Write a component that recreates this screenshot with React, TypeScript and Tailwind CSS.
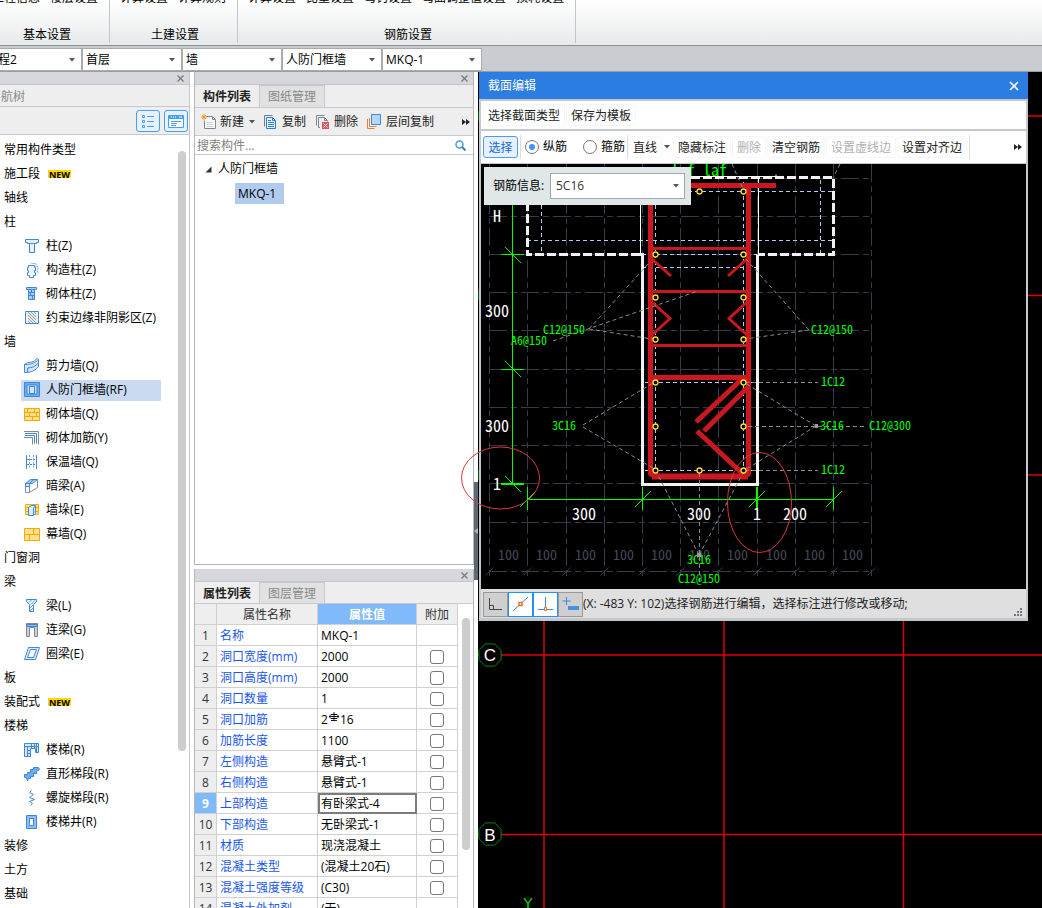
import React from "react";

const BLUE = "#3f86d6";

type IconName =
  | "column" | "tieColumn" | "brickColumn" | "hatch" | "shearWall" | "frameWall"
  | "brickWall" | "brickBar" | "insulation" | "hiddenBeam" | "pier" | "curtain"
  | "beam" | "linkBeam" | "ringBeam" | "stair" | "flight" | "spiral" | "well";

const icons: Record<IconName, React.ReactNode> = {
  column: (
    <g fill="#e8f2fd" stroke={BLUE}>
      <path d="M1.500 1.500h13v3h-2v1h-9v-1h-2z" />
      <path d="M5.500 5.500h5v9h-5z" />
    </g>
  ),
  tieColumn: (
    <g fill="none">
      <path d="M7 1.500h5v3h2v3h-1v2h1v2" stroke="#9cc3ec" />
      <path d="M4.500 3.500h6v2h1v3h-1v2h1v3h-2v2h-4v-2h-2v-3h1v-2h-1v-3h1z" stroke={BLUE} fill="#f3f8fe" />
    </g>
  ),
  brickColumn: (
    <g>
      <path d="M2.500 1.500h10v2h-10z" fill="#a9cdf5" stroke={BLUE} />
      <path d="M4.500 3.500h6v10h-6z" fill="#a9cdf5" stroke={BLUE} />
      <path d="M5 6.500h5M5 9.500h5M7.500 4v2M6.500 7v2M8.500 10v3" stroke={BLUE} />
    </g>
  ),
  hatch: (
    <g>
      <path d="M1.500 1.500h13v12h-13z" fill="#e8f2fd" stroke={BLUE} />
      <path d="M4 2h8v11h-8z" fill="#e4e4e4" />
      <path d="M4 2l8 8M4 5l8 8M4 8l5 5M4 11l2 2M7 2l5 5M10 2l2 2" stroke="#8c959c" strokeWidth=".8" />
    </g>
  ),
  shearWall: (
    <g stroke={BLUE} fill="#d4e6fb">
      <path d="M.500 6.500c7 0 11-2 14-5v7c-3 4-7 6-14 6z" />
      <path d="M.500 6.500l3-2c4 0 8-1 9-4l2 1M3.500 14v-4c5 0 8-2 11-5" fill="none" />
    </g>
  ),
  frameWall: (
    <g stroke={BLUE}>
      <path d="M.500.500h15v14h-15z" fill="#6badf2" />
      <path d="M3 3h10v9h-10z" fill="#c7dcf6" />
      <path d="M5.500 4.500h5v7h-5z" fill="#d6e6fa" />
    </g>
  ),
  brickWall: (
    <g stroke="#f5a800">
      <path d="M.500 2.500h15v12h-15z" fill="#ffe08e" />
      <path d="M0 6.500h16M0 10.500h16M10.500 3v3M5.500 7v3M12.500 7v3M8.500 11v3M3.500 3v3" />
    </g>
  ),
  brickBar: (
    <g fill="none">
      <path d="M0 1.500h14.500v13M0 7.500h8.500v7" stroke="#7d8a92" />
      <path d="M1 3.500h11.500v10M1 5.500h9.500v8" stroke={BLUE} />
    </g>
  ),
  insulation: (
    <g fill="none" stroke={BLUE}>
      <path d="M2.500 1v14M12.500 1v14" />
      <path d="M5.500 1v14M9.500 1v14" strokeDasharray="2 1.500" stroke="#6ea5e2" />
      <path d="M3 5.500h9M3 10.500h9" strokeDasharray="2 1" />
    </g>
  ),
  hiddenBeam: (
    <g>
      <path d="M1.500 5.500l5-4h7l-5 4z" fill="#a9cdf5" stroke={BLUE} />
      <path d="M1.500 5.500v9h4v-9zM5.500 14.500l8-5v-8" fill="none" stroke="#7d8a92" />
      <path d="M1.500 5.500h4v3h-4zM5.500 5.500l4-4" fill="#d4e6fb" stroke={BLUE} />
    </g>
  ),
  pier: (
    <g>
      <path d="M1.500 2.500h13v10h-13zM1 5.500h13M1 9.500h13" fill="#ffe08e" stroke="#f5a800" />
      <path d="M4.500 5.500l3-2h4v8l-2 2h-5z" fill="#dcebfc" stroke={BLUE} />
      <path d="M9.500 13v-7l2-2" fill="none" stroke={BLUE} />
    </g>
  ),
  curtain: (
    <g stroke="#f5a800">
      <path d="M.500 2.500h15v12h-15z" fill="#ffe08e" />
      <path d="M0 8.500h16M9.500 3v5M5.500 9v5" />
    </g>
  ),
  beam: (
    <g fill="#e8f2fd" stroke={BLUE}>
      <path d="M2.500 1.500h10v2l-3 3v7h-4v-7l-3-3z" />
      <path d="M5 4.500l3-3M7 6.500l4-4M6 10l3-3M6 13l3-3" strokeWidth=".8" />
    </g>
  ),
  linkBeam: (
    <g>
      <path d="M2.500 1.500h11v13h-3v-9h-5v9h-3z" fill="#c9d0d5" stroke="#7d8a92" />
      <path d="M3 2.500h10v2h-10z" fill="#8dbdf1" stroke={BLUE} />
    </g>
  ),
  ringBeam: (
    <g fill="none" stroke={BLUE}>
      <path d="M4.500 1.500h11l-4 12h-11z" fill="#dcebfc" />
      <path d="M6.500 3.500h6l-3 8h-6z" fill="#fff" />
    </g>
  ),
  stair: (
    <g fill="none" stroke={BLUE}>
      <path d="M.500 1.500h14v9h-3v-4h-5v8h-6z" fill="#d4e6fb" />
      <path d="M1 4.500h13M7.500 2v4M10.500 2v4M12.500 2v8M3.500 5v9M3 8.500h4M3 11.500h4" />
    </g>
  ),
  flight: (
    <path d="M.500 11.500v-3h3v-2h3v-3h3v-2h5l1 2-3 2v2h-3v3h-3v2h-2l-1 2.500-1-3z" fill="#6badf2" stroke={BLUE} />
  ),
  spiral: (
    <path d="M7.500.500l-2 2 4 2-4 3 5 2-5 2 3 2-2 2" fill="none" stroke={BLUE} />
  ),
  well: (
    <g stroke={BLUE}>
      <path d="M2.500 1.500h10v13h-10z" fill="#8dbdf1" />
      <path d="M5.500 4.500h4v7h-4z" fill="#fff" />
    </g>
  ),
};

type TreeItem = { label: string; icon?: IconName; isNew?: boolean; selected?: boolean };

const tree: TreeItem[] = [
  { label: "常用构件类型" },
  { label: "施工段", isNew: true },
  { label: "轴线" },
  { label: "柱" },
  { label: "柱(Z)", icon: "column" },
  { label: "构造柱(Z)", icon: "tieColumn" },
  { label: "砌体柱(Z)", icon: "brickColumn" },
  { label: "约束边缘非阴影区(Z)", icon: "hatch" },
  { label: "墙" },
  { label: "剪力墙(Q)", icon: "shearWall" },
  { label: "人防门框墙(RF)", icon: "frameWall", selected: true },
  { label: "砌体墙(Q)", icon: "brickWall" },
  { label: "砌体加筋(Y)", icon: "brickBar" },
  { label: "保温墙(Q)", icon: "insulation" },
  { label: "暗梁(A)", icon: "hiddenBeam" },
  { label: "墙垛(E)", icon: "pier" },
  { label: "幕墙(Q)", icon: "curtain" },
  { label: "门窗洞" },
  { label: "梁" },
  { label: "梁(L)", icon: "beam" },
  { label: "连梁(G)", icon: "linkBeam" },
  { label: "圈梁(E)", icon: "ringBeam" },
  { label: "板" },
  { label: "装配式", isNew: true },
  { label: "楼梯" },
  { label: "楼梯(R)", icon: "stair" },
  { label: "直形梯段(R)", icon: "flight" },
  { label: "螺旋梯段(R)", icon: "spiral" },
  { label: "楼梯井(R)", icon: "well" },
  { label: "装修" },
  { label: "土方" },
  { label: "基础" },
];

const properties: [string, string][] = [
  ["名称", "MKQ-1"],
  ["洞口宽度(mm)", "2000"],
  ["洞口高度(mm)", "2000"],
  ["洞口数量", "1"],
  ["洞口加筋", "2#16"],
  ["加筋长度", "1100"],
  ["左侧构造", "悬臂式-1"],
  ["右侧构造", "悬臂式-1"],
  ["上部构造", "有卧梁式-4"],
  ["下部构造", "无卧梁式-1"],
  ["材质", "现浇混凝土"],
  ["混凝土类型", "(混凝土20石)"],
  ["混凝土强度等级", "(C30)"],
  ["混凝土外加剂", "(无)"],
];

function Caret() {
  return (
    <svg width="6" height="4" viewBox="0 0 6 4" className="shrink-0" aria-hidden="true">
      <path d="M0 0h6L3 3.500z" fill="#555" />
    </svg>
  );
}

function More() {
  return (
    <svg width="8" height="6" viewBox="0 0 8 6" className="shrink-0" aria-hidden="true">
      <path d="M0 0l4 3-4 3zM4 0l4 3-4 3z" fill="#222" />
    </svg>
  );
}

function Combo({ label, value }: { label: string; value: string }) {
  return (
    <div className="relative flex h-[23px] w-25 items-center border border-[#a9abad] bg-white">
      <select aria-label={label} className="h-full w-full appearance-none pl-[3px] text-xs leading-5 text-black outline-none">
        <option>{value}</option>
      </select>
      <span className="pointer-events-none absolute right-1.5 flex"><Caret /></span>
    </div>
  );
}

function RibbonGroup({ items, title }: { items: string[]; title: string }) {
  return (
    <div className="flex flex-col items-center justify-between border-r border-[#c3c6c8] pr-[11px] pl-2.5">
      <div className="-mt-2.5 flex gap-2.5">
        {items.map((t) => (
          <button key={t} type="button" className="leading-4">{t}</button>
        ))}
      </div>
      <span className="pl-1 leading-4">{title}</span>
    </div>
  );
}

function PanelBar() {
  return (
    <div className="flex h-[13px] shrink-0 items-center justify-end border-b border-[#c3c6cc] bg-[#d5d7dc] pt-px pr-[5px]">
      <button type="button" aria-label="关闭" className="flex">
        <svg width="7" height="7" viewBox="0 0 7 7"><path d="M.500.500l6 6M6.500.500l-6 6" stroke="#777" strokeWidth="1.200" /></svg>
      </button>
    </div>
  );
}

function Tabs({ names, compact }: { names: [string, string]; compact?: boolean }) {
  return (
    <div className={compact ? "flex h-[22px] shrink-0 border-b border-[#c6c9ce] bg-[#eeeeee]" : "flex h-[23px] shrink-0 border-b border-[#c6c9ce] bg-[#eeeeee]"} role="tablist">
      <button type="button" role="tab" aria-selected="true" className="w-[65px] border-r border-[#c6c9ce] pt-0.5 font-bold text-[#222]">{names[0]}</button>
      <button type="button" role="tab" aria-selected="false" className="w-[65px] border-t border-r border-[#c6c9ce] bg-[#e1e1e1] pt-px text-[#888]">{names[1]}</button>
    </div>
  );
}

function NavPanel() {
  return (
    <aside className="flex w-[190px] shrink-0 flex-col border-r border-[#c3c6ca] bg-white">
      <PanelBar />
      <div className="flex h-[22px] shrink-0 items-center border-b border-[#c6c9ce] bg-[#eeeeee] pt-0.5 text-[#888]">
        <span className="-ml-[11px]">导航树</span>
      </div>
      <div className="flex h-7 shrink-0 items-center justify-end gap-1 border-b border-[#c6c9ce] bg-[#eeeeee] pr-px">
        <button type="button" aria-label="列表视图" className="flex h-[22px] w-6 items-center justify-center rounded-[3px] border border-[#4a9df5] bg-[#e6f1fd]">
          <svg width="14" height="14" viewBox="0 0 14 14" fill="none" stroke="#4a9df5">
            <path d="M1.500 1.500h2v2h-2zM1.500 6.500h2v2h-2zM1.500 11.500h2v2h-2z" />
            <path d="M6 2.500h7M6 7.500h7M6 12.500h7" />
          </svg>
        </button>
        <button type="button" aria-label="窗口视图" className="flex h-[22px] w-6 items-center justify-center rounded-[3px] border border-[#4a9df5] bg-[#e6f1fd]">
          <svg width="16" height="14" viewBox="0 0 16 14">
            <path d="M.500 1.500h15v12h-15z" fill="#fff" stroke="#4a9df5" />
            <path d="M1 1h14v4H1z" fill="#4a9df5" />
            <path d="M3 3h1M5 3h1M7 3h1M11 3h3" stroke="#fff" />
            <path d="M3 7.500h10M3 9.500h6M3 11.500h5" stroke="#4a9df5" />
          </svg>
        </button>
      </div>
      <div className="flex min-h-0 flex-1 overflow-hidden">
        <ul className="min-w-0 flex-1 pt-[3px]">
          {tree.map((item) =>
            item.icon ? (
              <li key={item.label} className="flex h-6 items-center pl-[21px]">
                <span className={item.selected ? "flex h-[21px] w-35 items-center bg-[#c9daf1] pl-[3px]" : "flex h-[21px] w-35 items-center pl-[3px]"}>
                  <svg width="16" height="16" viewBox="0 0 16 16" className="mr-1.5 shrink-0" aria-hidden="true">{icons[item.icon]}</svg>
                  <span className="whitespace-nowrap">{item.label}</span>
                </span>
              </li>
            ) : (
              <li key={item.label} className="flex h-6 items-center pl-1">
                {item.label}
                {item.isNew && (
                  <span className="ml-2 flex h-2 items-center bg-[#ffd800] px-px text-[9px] leading-none font-bold">NEW</span>
                )}
              </li>
            ),
          )}
        </ul>
        <div className="mt-4 mr-[3px] h-[600px] w-2 rounded-full bg-[#cdcdcd]" />
      </div>
    </aside>
  );
}

function ComponentPanel() {
  return (
    <section className="flex h-[493px] shrink-0 flex-col border border-t-0 border-[#b5b7ba] bg-white">
      <PanelBar />
      <Tabs names={["构件列表", "图纸管理"]} />
      <div className="flex h-7 shrink-0 items-center border-b border-[#c6c9ce] bg-[#eeeeee] pr-[3px] pl-1.5 text-[#222]">
        <button type="button" className="flex items-center gap-[3px]">
          <svg width="16" height="16" viewBox="0 0 16 16">
            <path d="M5.500 2.500h6l3 3v9h-11v-8" fill="#f6f6f6" stroke="#7d8a92" />
            <path d="M11.500 2.500v3h3" fill="none" stroke="#7d8a92" />
            <path d="M6 8.500h6M6 10.500h6M6 12.500h6" stroke="#d0d4d7" />
            <path d="M3 0v6M0 3h6M1 1l4 4M5 1l-4 4" stroke="#f59a1c" />
          </svg>
          新建
        </button>
        <span className="mr-2 ml-[5px]"><Caret /></span>
        <button type="button" className="flex items-center gap-[5px]">
          <svg width="14" height="16" viewBox="0 0 14 16">
            <path d="M1.500 12.500v-11h8" fill="none" stroke="#5f7f9f" />
            <path d="M3.500 3.500h6l3 3v8h-9z" fill="#e6f1fd" stroke="#2f7bd3" />
            <path d="M9.500 3.500v3h3M5 8.500h6M5 10.500h6M5 12.500h6M5 6.500h3" fill="none" stroke="#2f7bd3" />
          </svg>
          复制
        </button>
        <button type="button" className="ml-[9px] flex items-center gap-[3px]">
          <svg width="16" height="16" viewBox="0 0 16 16">
            <path d="M1.500 11.500v-10h8M5 13.500h-1.500v-10h6l3 3v1M9.500 3.500v3h3" fill="none" stroke="#7d8a92" />
            <path d="M7 8h7v7H7z" fill="#d9535a" />
            <path d="M8.500 9.500l4 4M12.500 9.500l-4 4" stroke="#fff" />
          </svg>
          删除
        </button>
        <button type="button" className="ml-2 flex items-center gap-1">
          <svg width="16" height="16" viewBox="0 0 16 16">
            <path d="M1.500 5v9.500h7M3.500 4v8.500h7" fill="none" stroke="#f08030" />
            <path d="M5.500.500h9v10h-9z" fill="#b5d6fb" stroke="#3f86d6" />
          </svg>
          层间复制
        </button>
        <button type="button" aria-label="更多" className="ml-auto flex"><More /></button>
      </div>
      <label className="flex h-[19px] shrink-0 items-center border-b border-[#c6c9ce] pr-[7px] pl-0.5">
        <input type="text" aria-label="搜索构件" placeholder="搜索构件..." className="h-full min-w-0 flex-1 text-xs outline-none placeholder:text-[#808080]" />
        <svg width="11" height="11" viewBox="0 0 11 11" fill="none">
          <circle cx="4.500" cy="4.500" r="3.500" stroke="#4a9fd0" strokeWidth="1.500" />
          <path d="M7 7l3.500 3.500" stroke="#2f86c0" strokeWidth="2" />
        </svg>
      </label>
      <ul className="pt-0.5">
        <li className="flex h-6 items-center pl-[10px]">
          <svg width="7" height="7" viewBox="0 0 7 7" className="mr-1.5"><path d="M6.500.500v6h-6z" fill="#333" /></svg>
          人防门框墙
        </li>
        <li className="flex h-6 items-center pl-10">
          <span className="h-[21px] w-[49px] bg-[#b1cbee] pl-[3px] leading-[21px]">MKQ-1</span>
        </li>
      </ul>
    </section>
  );
}

function RebarValue({ value }: { value: string }) {
  const [count, size] = value.split("#");
  return (
    <span className="flex items-center">
      {count}
      <svg width="10" height="11" viewBox="0 0 10 11" className="mx-px mb-1" fill="none" stroke="#000">
        <path d="M2 2.500h6l1 1v2l-1 1H2l-1-1v-2z" />
        <path d="M5 0v9M2 8.500h6M0 4.500h10" strokeWidth=".9" />
      </svg>
      {size}
    </span>
  );
}

function PropertyPanel() {
  const cell = "h-[21px] border-r border-b border-[#d0d0d0] p-0 pt-px";
  return (
    <section className="mt-1 flex min-h-0 flex-1 flex-col border-x border-[#b5b7ba] bg-white">
      <PanelBar />
      <Tabs names={["属性列表", "图层管理"]} compact />
      <div className="flex min-h-0 flex-1 overflow-hidden">
        <table className="w-[263px] shrink-0 table-fixed border-separate border-spacing-0 self-start leading-[19px]">
          <colgroup>
            <col className="w-[22px]" />
            <col className="w-[101px]" />
            <col className="w-[99px]" />
            <col className="w-[41px]" />
          </colgroup>
          <thead>
            <tr className="bg-[#eeeeee] text-[#333]">
              <th className={cell} aria-label="序号" />
              <th className={`${cell} font-normal`}>属性名称</th>
              <th className={`${cell} bg-[#80bafb] font-bold text-white`}>属性值</th>
              <th className={`${cell} font-normal`}>附加</th>
            </tr>
          </thead>
          <tbody>
            {properties.map(([name, value], i) => {
              const active = i === 8;
              return (
                <tr key={name}>
                  <td className={active ? `${cell} bg-[#80bafb] text-center font-bold text-white` : `${cell} bg-[#eeeeee] text-center text-[#333]`}>{i + 1}</td>
                  <td className={`${cell} pl-[3px] whitespace-nowrap text-[#1a56e8]`}>{name}</td>
                  <td className={active ? `${cell} pl-[3px] outline-2 -outline-offset-2 outline-[#7c7c7c]` : `${cell} pl-[3px]`}>
                    {value.includes("#") ? <RebarValue value={value} /> : value}
                  </td>
                  <td className={cell}>
                    {i > 0 && i < 13 && (
                      <input type="checkbox" aria-label={`附加 ${name}`} className="mx-auto block size-3.5 appearance-none rounded-[3px] border border-[#777] bg-white" />
                    )}
                  </td>
                </tr>
              );
            })}
          </tbody>
        </table>
        <div className="mt-3.5 ml-1 h-[232px] w-2 rounded-full bg-[#cdcdcd]" />
      </div>
    </section>
  );
}

const gridX = [489.5, 527.5, 566.5, 604.5, 642.5, 680.5, 718.5, 757.5, 795.5, 833.5, 871.5];
const gridY = [178.5, 216.5, 254.5, 292.5, 330.5, 369.5, 407.5, 445.5, 483.5, 522.5, 571.5];
const bars: [number, number][] = [
  [699, 191], [743, 191], [655, 254], [743, 254], [655, 297], [743, 297], [655, 339], [743, 339],
  [655, 382], [743, 382], [655, 426], [743, 426], [655, 470], [699, 470], [743, 470],
];
const greenLabels: [number, number, string][] = [
  [543, 334, "C12@150"], [511, 345, "A6@150"], [552, 430, "3C16"], [811, 334, "C12@150"],
  [821, 386, "1C12"], [820, 430, "3C16"], [869, 430, "C12@300"], [821, 474, "1C12"],
  [687, 564, "3C16"], [678, 583, "C12@150"],
];
const dims: [number, number, string][] = [
  [497, 222, "H"], [497, 317, "300"], [497, 432, "300"], [497, 490, "1"],
  [584, 520, "300"], [699, 520, "300"], [757, 520, "1"], [795, 520, "200"],
];
const cad = "font-['Noto_Sans_Mono_CJK_SC','DejaVu_Sans_Mono',monospace]";

function SectionDrawing() {
  return (
    <svg className={`block h-full w-full ${cad}`} role="img" aria-label="截面">
      <g transform="translate(-481 -164)" fill="none">
        <g stroke="#343b49">
          {gridX.map((x) => <path key={x} d={`M${x} 164V578`} strokeDasharray="18 4 6 4" />)}
          {gridY.map((y) => <path key={y} d={`M489 ${y}H872`} strokeDasharray="18 4 6 4" />)}
          {gridX.map((x) => <path key={x} d={`M${x - 4} 575.500l8-8`} />)}
        </g>
        <g fill="#434a58" fontSize="14" textAnchor="middle">
          {gridX.slice(0, 10).map((x) => <text key={x} x={x + 19} y="560">100</text>)}
        </g>
        <g stroke="#aecbf0" strokeDasharray="4 3">
          <path d="M541.500 191V254M541 191.500H833M527 240.500H833M820.500 180V254" />
          <path d="M655.500 191V474M743.500 182V474M642 254.500H757M642 267.500H757M645 382.500H752M645 470.500H752" />
        </g>
        <text x="671" y="176" fill="#00ff00" fontSize="16">laf laf</text>
        <path d="M527.500 178V254.500H642M691 177.500H833.500V254.500H758" stroke="#f2f2f2" strokeWidth="3" strokeDasharray="9 3" />
        <path d="M640.500 178V254M758.500 178V254M691 176.500H776V174.500" stroke="#fffff0" />
        <path d="M640 254.500H642.500V484.500H757.500V254.500" stroke="#f2f2f2" strokeWidth="3" />
        <g stroke="#c91820" strokeWidth="3">
          <path d="M650.500 180V473M748.500 186V472M650 185.500H776" strokeWidth="5" />
          <path d="M652 476.500H748" strokeWidth="6" />
          <path d="M650 377.500H748" strokeWidth="5" />
          <path d="M650 248.500H748M650 291.500H748M650 345.500H748" />
          <path d="M652 259l19 17M747 259l-19 17M652 302l18 16.500-18 16.500M747 302l-18 16.500 18 16.500" />
          <path d="M743 378L696 422M748 387L704 431M697 431L744 475" strokeWidth="5" />
          <circle cx="652" cy="473" r="2.500" fill="#c91820" />
          <circle cx="747" cy="473" r="2.500" fill="#c91820" />
        </g>
        <g stroke="#8c8c8c" strokeDasharray="4 3">
          <path d="M589 329L650 262M589 329L652 339M553 341L698 291" />
          <path d="M583 425L653 383M583 427L653 468" />
          <path d="M809 330L746 259M809 330L745 339M745 382.500H818M745 470.500H818" />
          <path d="M816 426L745 383M816 426L745 470M748 426.500H867" />
          <path d="M699 555L657 473M699.500 473V585M699 555L743 473M732 164L743 189M840 164L833 178" />
        </g>
        <path d="M697 553h4v4h-4zM815 424h3v4h-3z" fill="#9a9a9a" />
        <g stroke="#ffdf20" strokeWidth="1.300" fill="#000">
          {bars.map(([x, y]) => <circle key={`${x}-${y}`} cx={x + 0.5} cy={y + 0.5} r="2.500" />)}
        </g>
        <g stroke="#00ff00">
          <path d="M512.500 200V484M501 254.500h23M505 247l16 16M501 369.500h23M505 361l16 16M505 476l16 16" />
          <path d="M501 484h23" strokeWidth="2" />
          <path d="M527 499.500H834M527.500 487v23M642.500 487v23M833.500 487v23" />
          <path d="M520 507l16-16M635 507l16-16M749 507l16-16M826 507l16-16" />
          <path d="M757 487v23" strokeWidth="2" />
        </g>
        <g fill="#fff" fontSize="16" textAnchor="middle">
          {dims.map(([x, y, t]) => <text key={`${x}-${y}`} x={x} y={y}>{t}</text>)}
        </g>
        <g fill="#00ff00" fontSize="12">
          {greenLabels.map(([x, y, t]) => <text key={`${x}-${y}`} x={x} y={y}>{t}</text>)}
        </g>
      </g>
    </svg>
  );
}

function ToolButton({ children, muted }: { children: React.ReactNode; muted?: boolean }) {
  return (
    <button
      type="button"
      disabled={muted}
      className={
        muted
          ? "h-[22px] rounded-[3px] border border-[#f6f6f6] px-1 pt-px whitespace-nowrap text-[#b0b0b0]"
          : "h-[22px] rounded-[3px] border border-[#f6f6f6] px-1 pt-px whitespace-nowrap text-[#222]"
      }
    >
      {children}
    </button>
  );
}

function Radio({ label, checked }: { label: string; checked?: boolean }) {
  return (
    <label className="flex items-center gap-1 text-black">
      <span className="relative flex size-3.5 items-center justify-center">
        <input type="radio" name="bar-kind" defaultChecked={checked} className="peer size-3.5 appearance-none rounded-full border border-[#777] bg-white" />
        <span className="absolute hidden size-1.5 rounded-full bg-[#3f93f5] peer-checked:block" />
      </span>
      {label}
    </label>
  );
}

function SectionDialog() {
  return (
    <section role="dialog" aria-label="截面编辑" className="absolute top-0 left-px flex h-[549px] w-[549px] flex-col bg-[#c3c8cf]">
      <header className="flex h-[27px] shrink-0 items-center justify-between bg-[#2b7de1] px-[9px] text-white">
        <h2 className="pt-px">截面编辑</h2>
        <button type="button" aria-label="关闭" className="flex">
          <svg width="10" height="10" viewBox="0 0 10 10"><path d="M1 1l8 8M9 1l-8 8" stroke="#fff" strokeWidth="1.600" /></svg>
        </button>
      </header>
      <div className="mx-0.5 mt-0.5 flex h-7 shrink-0 items-center gap-px bg-white pl-0.5">
        <ToolButton>选择截面类型</ToolButton>
        <ToolButton>保存为模板</ToolButton>
      </div>
      <div className="mx-0.5 mt-0.5 mb-px flex h-8 shrink-0 items-center bg-white pr-1 pl-0.5">
        <button type="button" className="h-[22px] w-[35px] rounded-[3px] border border-[#4a9df5] bg-[#e6f1fd] pt-px text-[#1368d6]">选择</button>
        <span className="mr-1 ml-0.5 h-6 w-px bg-[#dcdcdc]" />
        <Radio label="纵筋" checked />
        <span className="w-4" />
        <Radio label="箍筋" />
        <span className="ml-0.5 h-6 w-px bg-[#dcdcdc]" />
        <ToolButton>直线</ToolButton>
        <span className="mr-[3px] ml-0.5"><Caret /></span>
        <span className="flex gap-px">
          <ToolButton>隐藏标注</ToolButton>
          <ToolButton muted>删除</ToolButton>
          <ToolButton>清空钢筋</ToolButton>
          <ToolButton muted>设置虚线边</ToolButton>
          <ToolButton>设置对齐边</ToolButton>
        </span>
        <span className="ml-0.5 h-6 w-px bg-[#dcdcdc]" />
        <button type="button" aria-label="更多" className="ml-auto flex"><More /></button>
      </div>
      <div className="relative mx-0.5 min-h-0 flex-1 overflow-hidden bg-black">
        <SectionDrawing />
        <label className="absolute top-[3px] left-[3px] flex h-[38px] w-[207px] items-center justify-between bg-[#dfe7e9] pr-1.5 pl-[9px] text-black">
          钢筋信息:
          <span className="relative flex h-[26px] w-[135px] items-center border border-[#a3a6a8] bg-white">
            <select className="h-full w-full appearance-none pl-[5px] text-xs text-[#333] outline-none">
              <option>5C16</option>
            </select>
            <span className="pointer-events-none absolute right-[5px]"><Caret /></span>
          </span>
        </label>
      </div>
      <footer className="mx-0.5 mb-[3px] flex h-[29px] shrink-0 items-center bg-[#dfdfe0] pt-px pl-0.5 text-[#222]">
        <button type="button" aria-label="正交" className="flex size-[25px] items-center justify-center border border-[#999] bg-[#cfcfd0]">
          <svg width="15" height="15" viewBox="0 0 15 15" fill="none" stroke="#444"><path d="M1.500 1v11.500H14M1.500 8.500h4v4" /></svg>
        </button>
        <button type="button" aria-label="对象捕捉" className="flex size-[25px] items-center justify-center border border-[#1e90ff] bg-white">
          <svg width="17" height="17" viewBox="0 0 17 17"><path d="M1 15L16 1" stroke="#3f86d6" /><path d="M7 6.500h3v3H7z" fill="#fff" stroke="#f07020" strokeWidth="1.500" /></svg>
        </button>
        <button type="button" aria-label="垂足" className="flex size-[25px] items-center justify-center border border-[#1e90ff] bg-white">
          <svg width="17" height="17" viewBox="0 0 17 17"><path d="M8.500 1v12M1 13.500h15" stroke="#3f86d6" /><path d="M7.500 11.500h2v3h-2z" fill="#fff" stroke="#f07020" /></svg>
        </button>
        <button type="button" aria-label="动态输入" className="flex size-[25px] items-center justify-center border border-[#999] bg-[#cfcfd0]">
          <svg width="17" height="17" viewBox="0 0 17 17"><path d="M4.500 1v8M.500 5h8" stroke="#3f86d6" /><path d="M6 10h11v4H6z" fill="#4a90e2" /></svg>
        </button>
        <span className="whitespace-nowrap">(X: -483 Y: 102)选择钢筋进行编辑，选择标注进行修改或移动;</span>
        <svg width="8" height="8" viewBox="0 0 8 8" className="mr-1 mb-0.5 ml-auto self-end" fill="#777">
          <path d="M6 0h2v2H6zM6 3h2v2H6zM3 3h2v2H3zM6 6h2v2H6zM3 6h2v2H3zM0 6h2v2H0z" />
        </svg>
      </footer>
    </section>
  );
}

function octagon(cx: number, cy: number) {
  const pts = Array.from({ length: 8 }, (_, k) => {
    const a = Math.PI / 8 + (k * Math.PI) / 4;
    return `${(cx + 12 * Math.cos(a)).toFixed(1)},${(cy + 12 * Math.sin(a)).toFixed(1)}`;
  });
  return pts.join(" ");
}

function ModelView() {
  return (
    <main className="relative min-w-0 flex-1 bg-black">
      <svg className="absolute inset-0 h-full w-full" aria-hidden="true">
        <g transform="translate(-478 -72)" fill="none">
          <g stroke="#e00000" strokeWidth="1.500">
            <path d="M490 116H2000M490 295.500H2000M490 475H2000M478 655H2000M478 834.500H2000" />
            <path d="M544 72V2000M724 72V2000M903.500 72V2000" />
          </g>
          <g stroke="#008a10" fill="#000">
            {[116, 295, 475, 655, 834].map((y) => <polygon key={y} points={octagon(490, y)} />)}
          </g>
          <g fill="#fff" fontSize="17" textAnchor="middle" className="font-['Liberation_Sans',sans-serif]">
            <text x="490" y="661">C</text>
            <text x="490" y="841">B</text>
          </g>
          <text x="523" y="908" fill="#00e000" fontSize="15" className="font-['Liberation_Sans',sans-serif]">Y</text>
        </g>
      </svg>
      <SectionDialog />
      <svg className="pointer-events-none absolute inset-0 h-full w-full overflow-visible" aria-hidden="true">
        <g transform="translate(-478 -72)" fill="none" stroke="#d83a3a">
          <ellipse cx="500.500" cy="478" rx="39" ry="31" />
          <ellipse cx="759.500" cy="502.500" rx="32" ry="50" />
        </g>
      </svg>
    </main>
  );
}

export default function App() {
  return (
    <div className="flex h-screen flex-col overflow-hidden bg-white font-['Open_Sans','Noto_Sans_CJK_SC',sans-serif] text-xs text-black">
      <header className="h-[46px] shrink-0 overflow-hidden border-b border-[#8e9295] bg-linear-to-b from-white to-[#e6eaeb]">
        <div className="-ml-[18px] flex h-[43px]">
          <RibbonGroup items={["工程信息", "楼层设置"]} title="基本设置" />
          <RibbonGroup items={["计算设置", "计算规则"]} title="土建设置" />
          <RibbonGroup items={["计算设置", "比重设置", "弯钩设置", "弯曲调整值设置", "损耗设置"]} title="钢筋设置" />
        </div>
      </header>
      <div className="flex h-[26px] shrink-0 items-end border-b border-[#9a9ea2] bg-[#c9cdd1]">
        <div className="-ml-[18px] flex">
          <Combo label="工程" value="工程2" />
          <Combo label="楼层" value="首层" />
          <Combo label="构件类别" value="墙" />
          <Combo label="构件类型" value="人防门框墙" />
          <Combo label="构件" value="MKQ-1" />
        </div>
      </div>
      <div className="flex min-h-0 flex-1">
        <NavPanel />
        <div className="ml-1 flex w-[280px] shrink-0 flex-col">
          <ComponentPanel />
          <PropertyPanel />
        </div>
        <div className="w-1 shrink-0 pt-[410px]">
          <div className="flex h-[98px] items-center bg-[#5d6872]">
            <svg width="4" height="6" viewBox="0 0 4 6"><path d="M4 0v6L0 3z" fill="#aeb6bd" /></svg>
          </div>
        </div>
        <ModelView />
      </div>
    </div>
  );
}
